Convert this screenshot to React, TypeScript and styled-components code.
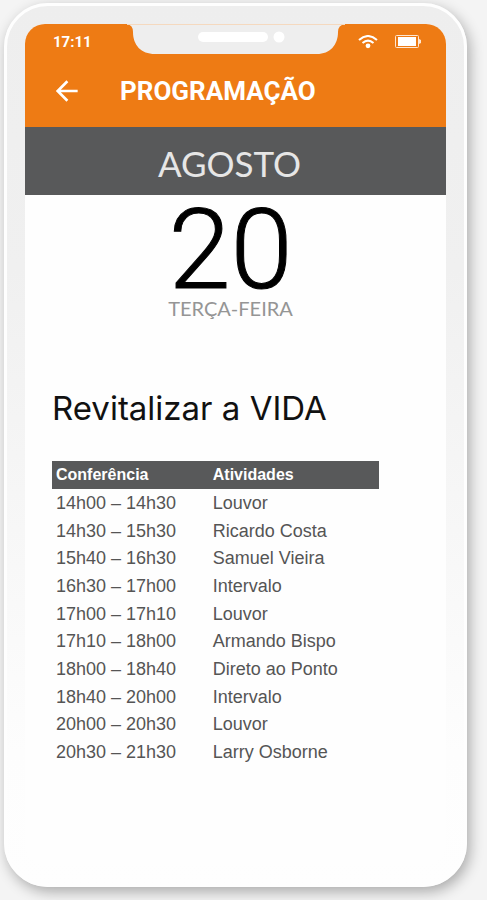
import React from "react";
import styled, { createGlobalStyle } from "styled-components";

const orange = "#ee7b14";
const slate = "#58595a";

const GlobalStyle = createGlobalStyle`
  *, *::before, *::after { box-sizing: border-box; }
  body {
    margin: 0;
    background: #f4f4f4;
    font-family: "Liberation Sans", Arial, sans-serif;
  }
`;

const Stage = styled.main`
  min-height: 100vh;
  padding: 3px 20px 13px 4px;
  display: flex;
`;

const Phone = styled.div`
  flex: 1;
  display: flex;
  padding: 18px 18px 19px;
  border: 3px solid #fefefe;
  border-radius: 44px;
  background: linear-gradient(#eeeeee, #f0f0f0 30%, #fdfdfd 85%, #fefefe);
  box-shadow: 3px 5px 14px rgba(0, 0, 0, 0.3);
`;

const Screen = styled.div`
  flex: 1;
  min-width: 0;
  overflow: hidden;
  border-radius: 20px;
  background: #fefefe;
`;

const Header = styled.header`
  background: ${orange};
  color: #fff;
  font-family: Roboto, sans-serif;
`;

const StatusBar = styled.div`
  display: grid;
  grid-template-columns: 1fr 218px 1fr;
  height: 36px;
`;

const Clock = styled.time`
  padding: 6px 0 0 28px;
  font-size: 15px;
  line-height: 24px;
  font-weight: 700;
`;

const Indicators = styled.div`
  display: flex;
  justify-content: flex-end;
  align-items: flex-start;
  gap: 17px;
  padding: 11px 25px 0 0;
`;

const TitleBar = styled.div`
  display: flex;
  align-items: center;
  gap: 37px;
  height: 67px;
  padding: 0 26px 6px;
`;

const BackButton = styled.button`
  display: flex;
  padding: 0;
  border: 0;
  background: none;
  color: inherit;
  cursor: pointer;
`;

const Title = styled.h1`
  margin: 0;
  font-size: 26px;
  line-height: 32px;
  font-weight: 700;
`;

const Month = styled.div`
  padding: 4px 12px 0 0;
  background: ${slate};
  color: #e6e6e6;
  font-family: Lato, sans-serif;
  font-weight: 400;
  font-size: 35px;
  line-height: 64px;
  text-align: center;
`;

const DateBlock = styled.div`
  display: flex;
  flex-direction: column;
  align-items: center;
  padding: 10px 10px 0 0;
  font-family: Lato, sans-serif;
`;

const Day = styled.span`
  font-family: Roboto, sans-serif;
  font-weight: 300;
  font-size: 112px;
  line-height: 90px;
  color: #000;
  -webkit-text-stroke: 1px #000;
`;

const Weekday = styled.span`
  font-size: 20px;
  line-height: 26px;
  color: #959595;
`;

const Session = styled.section`
  padding: 65px 27px 0;
`;

const SessionTitle = styled.h2`
  margin: 0 0 31px;
  font-family: Inter, sans-serif;
  font-size: 33px;
  line-height: 44px;
  font-weight: 400;
  color: #111;
`;

const Schedule = styled.table`
  width: 89%;
  height: 305px;
  border-collapse: collapse;
  table-layout: fixed;
  text-align: left;
  color: #555;
  font-size: 18px;
  line-height: 20px;

  th, td { padding: 0 0 0 4px; }
  th:first-child { width: 48%; }
`;

const HeadRow = styled.tr`
  height: 28px;
  background: ${slate};
  color: #fff;
  font-size: 16px;
`;

const rows = [
  ["14h00 – 14h30", "Louvor"],
  ["14h30 – 15h30", "Ricardo Costa"],
  ["15h40 – 16h30", "Samuel Vieira"],
  ["16h30 – 17h00", "Intervalo"],
  ["17h00 – 17h10", "Louvor"],
  ["17h10 – 18h00", "Armando Bispo"],
  ["18h00 – 18h40", "Direto ao Ponto"],
  ["18h40 – 20h00", "Intervalo"],
  ["20h00 – 20h30", "Louvor"],
  ["20h30 – 21h30", "Larry Osborne"],
];

function Notch() {
  return (
    <svg width="218" height="31" viewBox="0 0 218 31" aria-hidden="true">
      <path
        d="M0 0H218Q211 1 211 8C211 21 203 30 190 30H28C14 30 6 21 6 8Q6 1 0 0Z"
        fill="#eeeeee"
      />
      <path d="M0 .5H218" stroke="#f5d9bf" />
      <rect x="71" y="8" width="70" height="10" rx="5" fill="#fff" />
      <circle cx="152" cy="13" r="5.5" fill="#fff" />
    </svg>
  );
}

function WifiIcon() {
  return (
    <svg width="20" height="14" viewBox="0 0 20 14" fill="none" stroke="#fff" strokeWidth="2" role="img" aria-label="Wi-Fi">
      <path d="M1 5Q10-3 19 5" />
      <path d="M4.5 8Q10 3.2 15.5 8" />
      <circle cx="10" cy="10.8" r="2.4" fill="#fff" stroke="none" />
    </svg>
  );
}

function BatteryIcon() {
  return (
    <svg width="26" height="13" viewBox="0 0 26 13" role="img" aria-label="Bateria">
      <rect x=".5" y=".5" width="23" height="12" rx="1" fill="none" stroke="#ffe7d2" />
      <rect x="3" y="2" width="18" height="9" fill="#fff" />
      <path d="M24 4L26 5V8L24 9Z" fill="#ffe7d2" />
    </svg>
  );
}

function BackIcon() {
  return (
    <svg width="32" height="32" viewBox="0 0 24 24" fill="none" stroke="currentColor" strokeWidth="2" aria-hidden="true">
      <path d="M20 12H5.5M12.3 4.7L5 12L12.3 19.3" />
    </svg>
  );
}

export default function App() {
  return (
    <>
      <GlobalStyle />
      <Stage>
        <Phone>
          <Screen>
            <Header>
              <StatusBar>
                <Clock>17:11</Clock>
                <Notch />
                <Indicators>
                  <WifiIcon />
                  <BatteryIcon />
                </Indicators>
              </StatusBar>
              <TitleBar>
                <BackButton type="button" aria-label="Voltar">
                  <BackIcon />
                </BackButton>
                <Title>PROGRAMAÇÃO</Title>
              </TitleBar>
            </Header>
            <Month>AGOSTO</Month>
            <DateBlock>
              <Day>20</Day>
              <Weekday>TERÇA-FEIRA</Weekday>
            </DateBlock>
            <Session>
              <SessionTitle>Revitalizar a VIDA</SessionTitle>
              <Schedule>
                <thead>
                  <HeadRow>
                    <th scope="col">Conferência</th>
                    <th scope="col">Atividades</th>
                  </HeadRow>
                </thead>
                <tbody>
                  {rows.map(([time, activity]) => (
                    <tr key={time}>
                      <td>{time}</td>
                      <td>{activity}</td>
                    </tr>
                  ))}
                </tbody>
              </Schedule>
            </Session>
          </Screen>
        </Phone>
      </Stage>
    </>
  );
}
